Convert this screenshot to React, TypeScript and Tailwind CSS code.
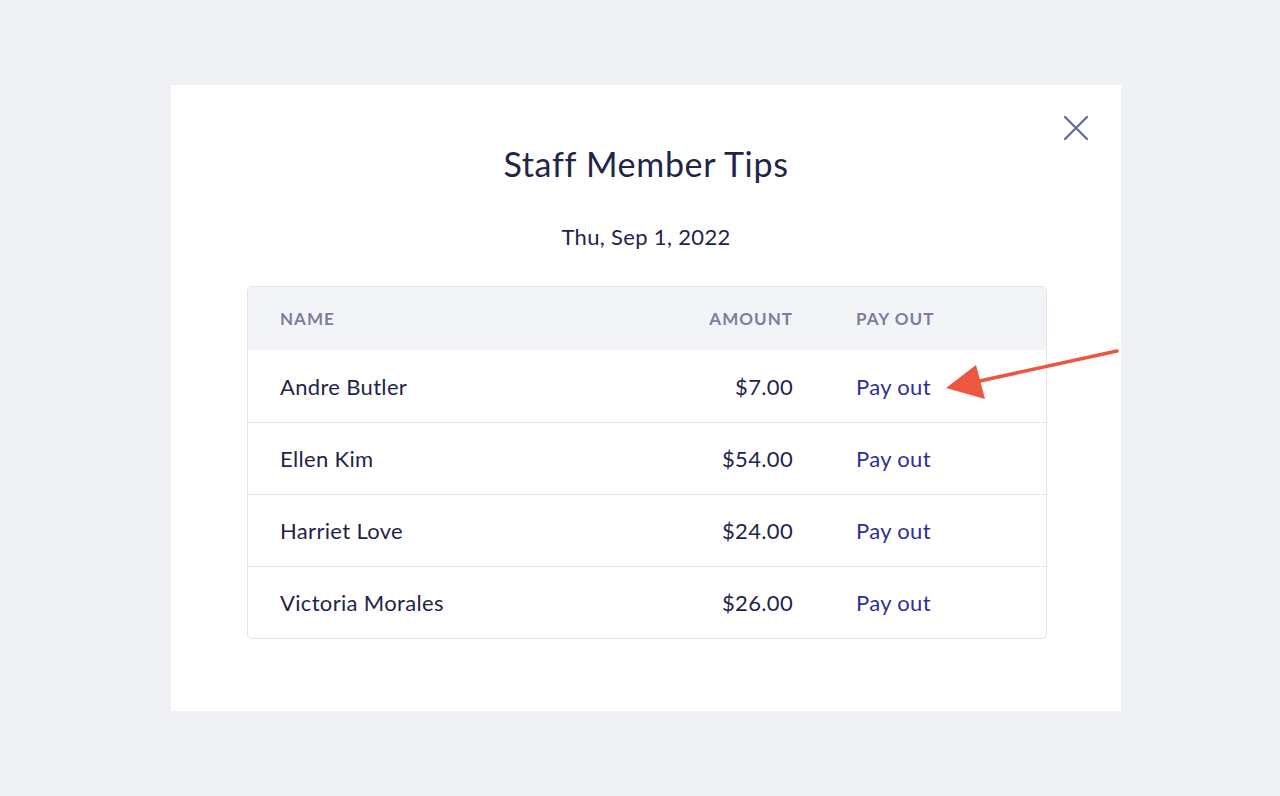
import React from 'react';

const rows = [
  { name: 'Andre Butler', amount: '$7.00' },
  { name: 'Ellen Kim', amount: '$54.00' },
  { name: 'Harriet Love', amount: '$24.00' },
  { name: 'Victoria Morales', amount: '$26.00' },
];

export default function App() {
  return (
    <div
      className="relative w-[1280px] h-[796px] bg-[#f0f1f5] pt-[85px] pl-[171px]"
      style={{ fontFamily: 'Lato, "Noto Sans", sans-serif' }}
    >
      <div className="relative w-[950px] h-[626px] bg-white flex flex-col items-center">
        <button className="absolute right-[32px] top-[30px] text-[#5f6c93]">
          <svg width="26" height="26" viewBox="0 0 26 26" fill="none" stroke="currentColor" strokeWidth="2.2" strokeLinecap="round">
            <path d="M2 2L24 24M24 2L2 24" />
          </svg>
        </button>

        <h1 className="mt-[59px] text-[34px] leading-[40px] tracking-[0.02em] text-[#1f2548]">Staff Member Tips</h1>
        <p className="mt-[39px] text-[22px] leading-[28px] tracking-[0.015em] text-[#1f2548]">Thu, Sep 1, 2022</p>

        <div className="mt-[35px] ml-[2px] w-[800px] border border-[#e1e3ea] rounded-[5px] overflow-hidden">
          <div className="grid grid-cols-[1fr_200px_158px] gap-x-[63px] pl-8 pr-8 h-[63px] items-center bg-[#f3f4f8] text-[17px] font-bold tracking-[0.06em] text-[#7b7f9a]">
            <span>NAME</span>
            <span className="text-right">AMOUNT</span>
            <span>PAY OUT</span>
          </div>
          {rows.map((r, i) => (
            <div
              key={r.name}
              className={`grid grid-cols-[1fr_200px_158px] gap-x-[63px] pl-8 pr-8 h-[72px] items-center text-[22px] tracking-[0.015em] ${i > 0 ? 'border-t border-[#e4e6ec]' : ''}`}
            >
              <span className="text-[#1f2548]">{r.name}</span>
              <span className="text-right text-[#1f2548]">{r.amount}</span>
              <a className="text-[#2f3290] cursor-pointer">Pay out</a>
            </div>
          ))}
        </div>
      </div>

      {/* annotation arrow */}
      <svg className="absolute left-0 top-0 pointer-events-none" width="1280" height="796">
        <line x1="1117" y1="351" x2="975" y2="382" stroke="#ef5640" strokeWidth="3.5" strokeLinecap="round" />
        <polygon points="946,388 976,365 985,399" fill="#ef5640" />
      </svg>
    </div>
  );
}
